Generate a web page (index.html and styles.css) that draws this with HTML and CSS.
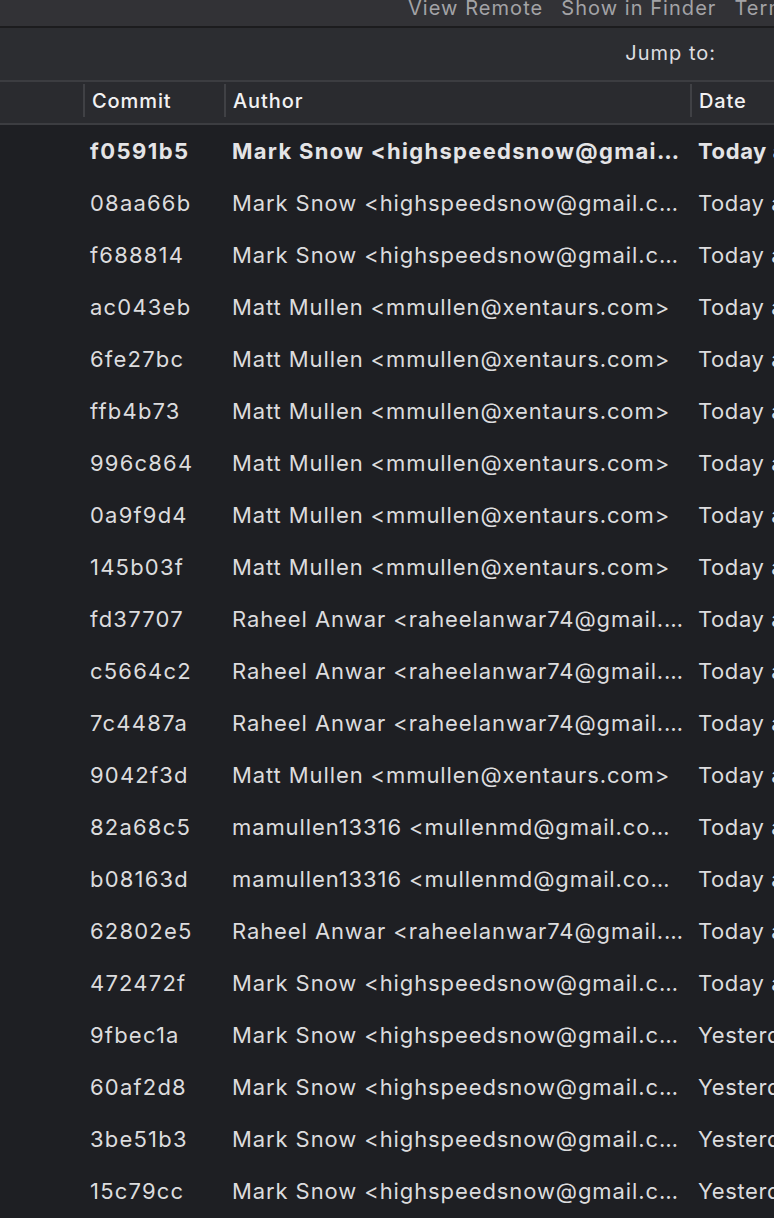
FILE: index.html
```html
<!DOCTYPE html>
<html>
<head>
<meta charset="utf-8">
<link rel="stylesheet" href="styles.css">
</head>
<body>
<div class="app">
  <div class="toolbar">
    <span class="tb-item">View Remote</span>
    <span class="tb-item">Show in Finder</span>
    <span class="tb-item">Terminal</span>
  </div>
  <div class="jumpbar">
    <span class="jump">Jump to:</span>
  </div>
  <div class="header">
    <div class="col c-graph"></div>
    <div class="col c-commit">Commit</div>
    <div class="col c-author">Author</div>
    <div class="col c-date">Date</div>
  </div>
  <div class="rows">
    <div class="row bold"><div class="c-graph"></div><div class="c-commit">f0591b5</div><div class="c-author">Mark Snow &lt;highspeedsnow@gmai…</div><div class="c-date">Today at 10:12</div></div>
    <div class="row"><div class="c-graph"></div><div class="c-commit">08aa66b</div><div class="c-author">Mark Snow &lt;highspeedsnow@gmail.c…</div><div class="c-date">Today at 10:02</div></div>
    <div class="row"><div class="c-graph"></div><div class="c-commit">f688814</div><div class="c-author">Mark Snow &lt;highspeedsnow@gmail.c…</div><div class="c-date">Today at 09:58</div></div>
    <div class="row"><div class="c-graph"></div><div class="c-commit">ac043eb</div><div class="c-author">Matt Mullen &lt;mmullen@xentaurs.com&gt;</div><div class="c-date">Today at 09:40</div></div>
    <div class="row"><div class="c-graph"></div><div class="c-commit">6fe27bc</div><div class="c-author">Matt Mullen &lt;mmullen@xentaurs.com&gt;</div><div class="c-date">Today at 09:31</div></div>
    <div class="row"><div class="c-graph"></div><div class="c-commit">ffb4b73</div><div class="c-author">Matt Mullen &lt;mmullen@xentaurs.com&gt;</div><div class="c-date">Today at 09:22</div></div>
    <div class="row"><div class="c-graph"></div><div class="c-commit">996c864</div><div class="c-author">Matt Mullen &lt;mmullen@xentaurs.com&gt;</div><div class="c-date">Today at 09:10</div></div>
    <div class="row"><div class="c-graph"></div><div class="c-commit">0a9f9d4</div><div class="c-author">Matt Mullen &lt;mmullen@xentaurs.com&gt;</div><div class="c-date">Today at 08:57</div></div>
    <div class="row"><div class="c-graph"></div><div class="c-commit">145b03f</div><div class="c-author">Matt Mullen &lt;mmullen@xentaurs.com&gt;</div><div class="c-date">Today at 08:45</div></div>
    <div class="row"><div class="c-graph"></div><div class="c-commit">fd37707</div><div class="c-author">Raheel Anwar &lt;raheelanwar74@gmail.…</div><div class="c-date">Today at 08:30</div></div>
    <div class="row"><div class="c-graph"></div><div class="c-commit">c5664c2</div><div class="c-author">Raheel Anwar &lt;raheelanwar74@gmail.…</div><div class="c-date">Today at 08:21</div></div>
    <div class="row"><div class="c-graph"></div><div class="c-commit">7c4487a</div><div class="c-author">Raheel Anwar &lt;raheelanwar74@gmail.…</div><div class="c-date">Today at 08:12</div></div>
    <div class="row"><div class="c-graph"></div><div class="c-commit">9042f3d</div><div class="c-author">Matt Mullen &lt;mmullen@xentaurs.com&gt;</div><div class="c-date">Today at 07:59</div></div>
    <div class="row"><div class="c-graph"></div><div class="c-commit">82a68c5</div><div class="c-author">mamullen13316 &lt;mullenmd@gmail.co…</div><div class="c-date">Today at 07:44</div></div>
    <div class="row"><div class="c-graph"></div><div class="c-commit">b08163d</div><div class="c-author">mamullen13316 &lt;mullenmd@gmail.co…</div><div class="c-date">Today at 07:30</div></div>
    <div class="row"><div class="c-graph"></div><div class="c-commit">62802e5</div><div class="c-author">Raheel Anwar &lt;raheelanwar74@gmail.…</div><div class="c-date">Today at 07:12</div></div>
    <div class="row"><div class="c-graph"></div><div class="c-commit">472472f</div><div class="c-author">Mark Snow &lt;highspeedsnow@gmail.c…</div><div class="c-date">Today at 06:50</div></div>
    <div class="row"><div class="c-graph"></div><div class="c-commit">9fbec1a</div><div class="c-author">Mark Snow &lt;highspeedsnow@gmail.c…</div><div class="c-date">Yesterday at 22:10</div></div>
    <div class="row"><div class="c-graph"></div><div class="c-commit">60af2d8</div><div class="c-author">Mark Snow &lt;highspeedsnow@gmail.c…</div><div class="c-date">Yesterday at 21:48</div></div>
    <div class="row"><div class="c-graph"></div><div class="c-commit">3be51b3</div><div class="c-author">Mark Snow &lt;highspeedsnow@gmail.c…</div><div class="c-date">Yesterday at 21:30</div></div>
    <div class="row"><div class="c-graph"></div><div class="c-commit">15c79cc</div><div class="c-author">Mark Snow &lt;highspeedsnow@gmail.c…</div><div class="c-date">Yesterday at 21:02</div></div>
  </div>
</div>
</body>
</html>
```

FILE: styles.css
```css
html, body {
  margin: 0;
  padding: 0;
  background: #1e1f23;
  overflow: hidden;
}
.app {
  width: 774px;
  height: 1218px;
  overflow: hidden;
  font-family: Inter, "Noto Sans", sans-serif;
  color: #dfdfe0;
}
.toolbar {
  height: 26px;
  background: #323236;
  border-bottom: 2px solid #1c1c1e;
  display: flex;
  align-items: flex-end;
  gap: 18px;
  padding-left: 408px;
  white-space: nowrap;
  overflow: hidden;
  font-size: 20px;
  letter-spacing: 1.05px;
  color: #a3a3a6;
  line-height: 20px;
}
.tb-item {
  position: relative;
  top: -8px;
}
.jumpbar {
  height: 52px;
  background: #2c2d31;
  display: flex;
  align-items: center;
  justify-content: flex-end;
  padding-right: 58px;
  border-bottom: 2px solid #3c3d41;
  font-size: 20px;
  letter-spacing: 1px;
}
.jump {
  color: #dedee0;
  position: relative;
  top: -1px;
}
.header {
  height: 39px;
  background: #2a2b2f;
  border-bottom: 2px solid #3c3d41;
  display: flex;
  align-items: flex-start;
  padding-top: 2px;
  box-sizing: content-box;
  font-size: 20px;
  font-weight: 500;
  letter-spacing: 0.9px;
  color: #f2f2f3;
  white-space: nowrap;
}
.header .col {
  height: 33px;
  display: flex;
  align-items: center;
  box-sizing: border-box;
}
.header .c-commit,
.header .c-author,
.header .c-date {
  border-left: 2px solid #404145;
  padding-left: 7px;
}
.c-graph { width: 83px; flex: none; }
.c-commit { width: 141px; flex: none; box-sizing: border-box; }
.c-author { width: 466px; flex: none; box-sizing: border-box; }
.c-date { flex: none; box-sizing: border-box; }
.rows .c-commit { padding-left: 7px; letter-spacing: 1.2px; }
.rows .c-author { padding-left: 8px; overflow: hidden; }
.rows .c-date { padding-left: 8px; letter-spacing: 0.6px; }
.row {
  height: 52px;
  display: flex;
  align-items: center;
  font-size: 22px;
  letter-spacing: 0.9px;
  white-space: nowrap;
  color: #dcdcde;
}
.row.bold { font-weight: 700; color: #e4e4e6; letter-spacing: 1.3px; }
.row.bold .c-commit { letter-spacing: 1.45px; }
.row.bold .c-date { letter-spacing: 0.6px; }
```
